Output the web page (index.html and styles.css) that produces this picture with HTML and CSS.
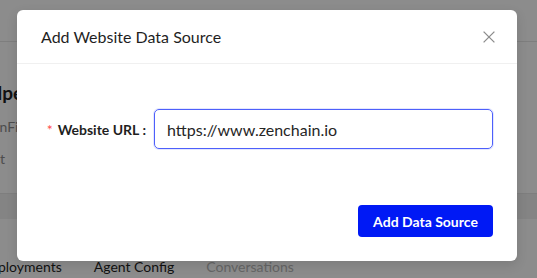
FILE: index.html
```html
<!DOCTYPE html>
<html>
<head>
<meta charset="utf-8">
<link rel="stylesheet" href="styles.css">
</head>
<body>
<div class="app">
  <div class="topbar"></div>
  <div class="section">
    <div class="agent-name">Helper</div>
    <div class="agent-sub">ZenFinance</div>
    <div class="agent-meta">Test</div>
  </div>
  <div class="band"></div>
  <div class="tabs">
    <span class="tab">Deployments</span>
    <span class="tab">Agent Config</span>
    <span class="tab tab-muted">Conversations</span>
  </div>
</div>
<div class="overlay"></div>
<div class="modal">
  <div class="modal-header">
    <div class="modal-title">Add Website Data Source</div>
    <button class="close" aria-label="Close">
      <svg width="12" height="12" viewBox="0 0 12 12"><path d="M0.6 0.6 L11.4 11.4 M11.4 0.6 L0.6 11.4" stroke="#8c8c8c" stroke-width="1.3" fill="none"/></svg>
    </button>
  </div>
  <div class="modal-body">
    <div class="form-row">
      <label class="label"><span class="req">*</span>Website URL<span class="colon">:</span></label>
      <div class="input">https://www.zenchain.io</div>
    </div>
  </div>
  <div class="modal-footer">
    <button class="primary">Add Data Source</button>
  </div>
</div>
</body>
</html>
```

FILE: styles.css
```css
html, body {
  margin: 0;
  padding: 0;
}
body {
  width: 537px;
  height: 278px;
  overflow: hidden;
  font-family: Lato, "Open Sans", sans-serif;
  background: #ffffff;
  position: relative;
}
.app {
  display: flex;
  flex-direction: column;
  height: 278px;
}
.topbar {
  height: 41px;
  border-bottom: 1px solid #e6e6e6;
}
.section {
  display: flex;
  flex-direction: column;
  height: 151px;
}
.agent-name {
  font-size: 19px;
  font-weight: 700;
  color: #1f1f1f;
  margin-top: 40px;
  margin-left: -27px;
  line-height: 22px;
}
.agent-sub {
  font-size: 14px;
  color: #8c8c8c;
  margin-top: 14px;
  margin-left: -16px;
  line-height: 18px;
}
.agent-meta {
  font-size: 14px;
  color: #8c8c8c;
  margin-top: 14px;
  margin-left: -20px;
  line-height: 18px;
}
.band {
  height: 25px;
  background: #f0f0f0;
  border-top: 1px solid #e6e6e6;
}
.tabs {
  display: flex;
  gap: 32px;
  margin-left: -20px;
  padding-top: 39px;
  font-size: 14px;
  line-height: 17px;
  color: #1f1f1f;
}
.tab-muted {
  color: #b8b8b8;
}
.overlay {
  position: absolute;
  inset: 0;
  background: rgba(0, 0, 0, 0.45);
}
.modal {
  position: absolute;
  left: 17px;
  top: 10px;
  width: 500px;
  background: #ffffff;
  border-radius: 6px;
  box-shadow: 0 4px 12px rgba(0, 0, 0, 0.12);
}
.modal-header {
  display: flex;
  align-items: center;
  justify-content: space-between;
  height: 53px;
  padding: 0 22px 0 24px;
  border-bottom: 1px solid #f0f0f0;
}
.modal-title {
  font-size: 16px;
  color: #1f1f1f;
  line-height: 22px;
}
.close {
  border: 0;
  background: none;
  padding: 0;
  width: 12px;
  height: 12px;
  display: flex;
}
.modal-body {
  padding: 45px 24px 0 24px;
}
.form-row {
  display: flex;
  align-items: center;
}
.label {
  width: 113px;
  display: flex;
  justify-content: flex-end;
  align-items: center;
  font-size: 14px;
  font-weight: 700;
  color: #1f1f1f;
  white-space: nowrap;
}
.req {
  color: #ff4d4f;
  font-weight: 400;
  font-size: 14px;
  margin-right: 5px;
}
.colon {
  margin-left: 3px;
  margin-right: 8px;
}
.input {
  flex: 1;
  height: 40px;
  box-sizing: border-box;
  border: 1.5px solid #4d5ffb;
  border-radius: 5px;
  box-shadow: 0 0 0 1px rgba(77, 95, 251, 0.15);
  padding: 0 12px;
  display: flex;
  align-items: center;
  font-size: 16px;
  color: #262626;
}
.modal-footer {
  display: flex;
  justify-content: flex-end;
  padding: 56px 24px 24px 24px;
}
.primary {
  width: 135px;
  height: 32px;
  border: 0;
  border-radius: 4px;
  background: #0019f5;
  color: #ffffff;
  font-family: Lato, sans-serif;
  font-size: 14px;
  font-weight: 700;
  padding: 0;
}
```
